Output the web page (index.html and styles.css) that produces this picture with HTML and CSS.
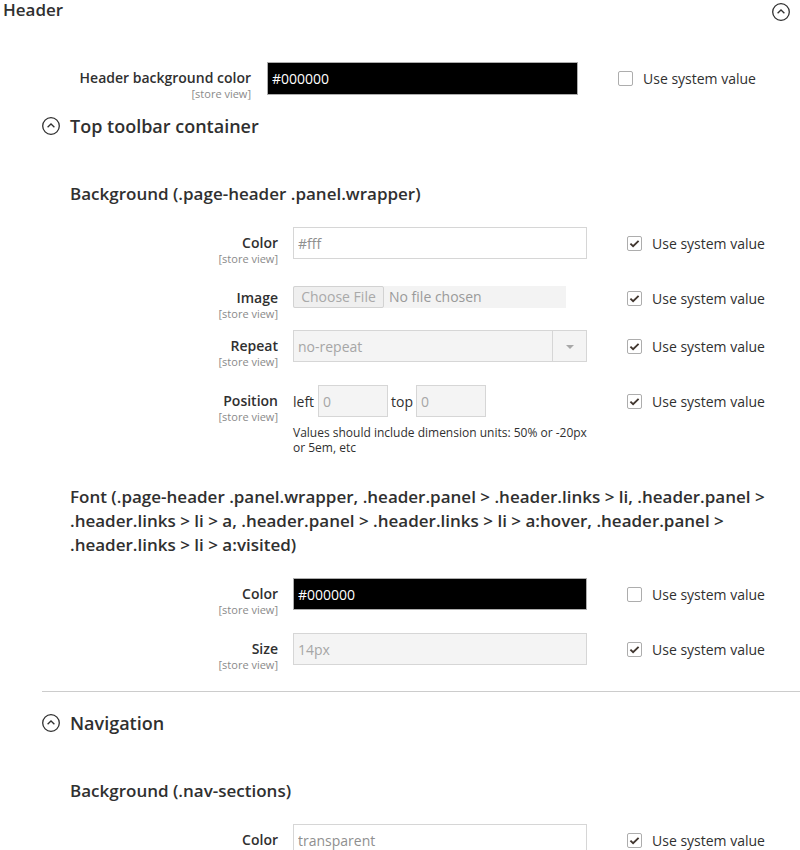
FILE: index.html
```html
<!DOCTYPE html>
<html lang="en">
<head>
<meta charset="utf-8">
<title>Header configuration</title>
<link rel="stylesheet" href="styles.css">
</head>
<body>
<div class="page">
  <div class="section-head">
    <h2 class="section-title">Header</h2>
    <span class="toggle">
      <svg width="18" height="18" viewBox="0 0 18 18"><circle cx="9" cy="9" r="8.3" fill="none" stroke="#303030" stroke-width="1.3"/><path d="M5.6 10.3 L9 7 L12.4 10.3" fill="none" stroke="#303030" stroke-width="1.3"/></svg>
    </span>
  </div>

  <div class="field field-top">
    <div class="label"><span class="label-text">Header background color</span><span class="scope">[store view]</span></div>
    <div class="control"><input class="input input-dark input-tall" type="text" value="#000000"></div>
    <label class="use-default"><span class="cb"></span>Use system value</label>
  </div>

  <div class="group">
    <div class="group-head">
      <svg class="toggle-icon" width="18" height="18" viewBox="0 0 18 18"><circle cx="9" cy="9" r="8.3" fill="none" stroke="#303030" stroke-width="1.3"/><path d="M5.6 10.3 L9 7 L12.4 10.3" fill="none" stroke="#303030" stroke-width="1.3"/></svg>
      <h3 class="group-title">Top toolbar container</h3>
    </div>

    <h4 class="subhead">Background (.page-header .panel.wrapper)</h4>

    <div class="field">
      <div class="label"><span class="label-text">Color</span><span class="scope">[store view]</span></div>
      <div class="control"><input class="input input-light" type="text" value="#fff" disabled></div>
      <label class="use-default"><span class="cb cb-checked"><svg width="15" height="15" viewBox="0 0 15 15"><path d="M3.4 7.6 L6.1 10.1 L11.6 4.9" fill="none" stroke="#41362f" stroke-width="1.9"/></svg></span>Use system value</label>
    </div>

    <div class="field field-file">
      <div class="label"><span class="label-text">Image</span><span class="scope">[store view]</span></div>
      <div class="control">
        <div class="file"><span class="file-btn">Choose File</span><span class="file-name">No file chosen</span></div>
      </div>
      <label class="use-default"><span class="cb cb-checked"><svg width="15" height="15" viewBox="0 0 15 15"><path d="M3.4 7.6 L6.1 10.1 L11.6 4.9" fill="none" stroke="#41362f" stroke-width="1.9"/></svg></span>Use system value</label>
    </div>

    <div class="field">
      <div class="label"><span class="label-text">Repeat</span><span class="scope">[store view]</span></div>
      <div class="control">
        <div class="select"><span class="select-value">no-repeat</span><span class="select-arrow"></span></div>
      </div>
      <label class="use-default"><span class="cb cb-checked"><svg width="15" height="15" viewBox="0 0 15 15"><path d="M3.4 7.6 L6.1 10.1 L11.6 4.9" fill="none" stroke="#41362f" stroke-width="1.9"/></svg></span>Use system value</label>
    </div>

    <div class="field">
      <div class="label"><span class="label-text">Position</span><span class="scope">[store view]</span></div>
      <div class="control">
        <div class="position">
          <span class="pos-label">left</span><input class="input input-disabled pos-left" type="text" value="0" disabled>
          <span class="pos-label">top</span><input class="input input-disabled pos-top" type="text" value="0" disabled>
        </div>
        <p class="note">Values should include dimension units: 50% or -20px or 5em, etc</p>
      </div>
      <label class="use-default"><span class="cb cb-checked"><svg width="15" height="15" viewBox="0 0 15 15"><path d="M3.4 7.6 L6.1 10.1 L11.6 4.9" fill="none" stroke="#41362f" stroke-width="1.9"/></svg></span>Use system value</label>
    </div>

    <h4 class="subhead">Font (.page-header .panel.wrapper, .header.panel &gt; .header.links &gt; li, .header.panel &gt; .header.links &gt; li &gt; a, .header.panel &gt; .header.links &gt; li &gt; a:hover, .header.panel &gt; .header.links &gt; li &gt; a:visited)</h4>

    <div class="field">
      <div class="label"><span class="label-text">Color</span><span class="scope">[store view]</span></div>
      <div class="control"><input class="input input-dark" type="text" value="#000000"></div>
      <label class="use-default"><span class="cb"></span>Use system value</label>
    </div>

    <div class="field">
      <div class="label"><span class="label-text">Size</span><span class="scope">[store view]</span></div>
      <div class="control"><input class="input input-disabled" type="text" value="14px" disabled></div>
      <label class="use-default"><span class="cb cb-checked"><svg width="15" height="15" viewBox="0 0 15 15"><path d="M3.4 7.6 L6.1 10.1 L11.6 4.9" fill="none" stroke="#41362f" stroke-width="1.9"/></svg></span>Use system value</label>
    </div>
  </div>

  <div class="group">
    <div class="group-head">
      <svg class="toggle-icon" width="18" height="18" viewBox="0 0 18 18"><circle cx="9" cy="9" r="8.3" fill="none" stroke="#303030" stroke-width="1.3"/><path d="M5.6 10.3 L9 7 L12.4 10.3" fill="none" stroke="#303030" stroke-width="1.3"/></svg>
      <h3 class="group-title">Navigation</h3>
    </div>

    <h4 class="subhead">Background (.nav-sections)</h4>

    <div class="field">
      <div class="label"><span class="label-text">Color</span><span class="scope">[store view]</span></div>
      <div class="control"><input class="input input-light" type="text" value="transparent" disabled></div>
      <label class="use-default"><span class="cb cb-checked"><svg width="15" height="15" viewBox="0 0 15 15"><path d="M3.4 7.6 L6.1 10.1 L11.6 4.9" fill="none" stroke="#41362f" stroke-width="1.9"/></svg></span>Use system value</label>
    </div>
  </div>
</div>
</body>
</html>
```

FILE: styles.css
```css
html, body {
  margin: 0;
  padding: 0;
  background: #fff;
}

body {
  font-family: "Open Sans", "Liberation Sans", sans-serif;
  color: #303030;
  font-size: 14px;
}

.page {
  width: 800px;
  overflow: hidden;
}

.section-head {
  display: flex;
  justify-content: space-between;
  align-items: flex-start;
  height: 21px;
  padding: 0 10px 0 3px;
}

.section-title {
  margin: 0;
  font-size: 17px;
  line-height: 21px;
  font-weight: 600;
  color: #303030;
  position: relative;
  top: -1px;
}

.toggle {
  display: block;
  width: 18px;
  height: 18px;
  margin-top: 3px;
}

.toggle svg, .toggle-icon {
  display: block;
}

/* field rows */
.field {
  display: grid;
  grid-template-columns: 236px 294px auto;
  column-gap: 15px;
  align-items: start;
  margin-bottom: 17px;
}

.field-top {
  grid-template-columns: 251px 311px auto;
  column-gap: 16px;
  margin-top: 41px;
  margin-bottom: 14px;
}

.field-file {
  margin-bottom: 10px;
}

.label {
  display: flex;
  flex-direction: column;
  align-items: flex-end;
  text-align: right;
  padding-top: 7px;
}

.label-text {
  font-size: 14px;
  line-height: 18px;
  font-weight: 600;
  color: #303030;
}

.scope {
  font-size: 11px;
  line-height: 13px;
  color: #8a8a8a;
}

.control {
  min-width: 0;
}

.input {
  display: block;
  box-sizing: border-box;
  width: 100%;
  height: 32px;
  margin: 0;
  padding: 0 4px;
  border: 1px solid #adadad;
  border-radius: 0;
  font-family: "Open Sans", "Liberation Sans", sans-serif;
  font-size: 14px;
  outline: none;
}

.input-tall {
  height: 33px;
}

.input-dark {
  background: #000;
  color: #fff;
  border-color: #adadad;
}

.input-light {
  background: #fff;
  color: #8f8f8f;
  border-color: #d6d6d6;
}

.input-disabled {
  background: #f4f4f4;
  color: #a6a6a6;
  border-color: #d6d6d6;
}

/* checkbox column */
.use-default {
  display: flex;
  align-items: center;
  gap: 10px;
  height: 33px;
  margin-left: 25px;
  font-size: 14px;
  color: #303030;
  white-space: nowrap;
}

.field-top .use-default {
  margin-left: 24px;
}

.cb {
  box-sizing: border-box;
  display: block;
  width: 15px;
  height: 15px;
  border: 1px solid #adadad;
  border-radius: 2px;
  background: #fff;
  position: relative;
}

.cb svg {
  position: absolute;
  left: -1px;
  top: -1px;
}

/* file */
.file {
  display: flex;
  align-items: stretch;
  width: 273px;
  height: 22px;
  margin-top: 4px;
  background: #f3f3f3;
}

.file-btn {
  box-sizing: border-box;
  width: 91px;
  border: 1px solid #d2d2d2;
  border-radius: 2px;
  background: #efefef;
  color: #a9a9a9;
  text-align: center;
  line-height: 20px;
  font-size: 14px;
}

.file-name {
  padding-left: 5px;
  line-height: 22px;
  color: #9a9a9a;
}

/* select */
.select {
  box-sizing: border-box;
  display: flex;
  width: 100%;
  height: 32px;
  border: 1px solid #d6d6d6;
  background: #f4f4f4;
}

.select-value {
  flex: 1;
  padding-left: 4px;
  line-height: 31px;
  color: #a6a6a6;
}

.select-arrow {
  position: relative;
  width: 33px;
  border-left: 1px solid #d6d6d6;
}

.select-arrow::after {
  content: "";
  position: absolute;
  left: 13px;
  top: 14px;
  border-left: 4px solid transparent;
  border-right: 4px solid transparent;
  border-top: 4px solid #a8a8a8;
}

/* position */
.position {
  display: flex;
  align-items: center;
}

.pos-label {
  font-size: 14px;
  color: #303030;
}

.pos-left {
  width: 70px;
  margin-left: 4px;
  margin-right: 3px;
}

.pos-top {
  width: 70px;
  margin-left: 3px;
}

.note {
  margin: 8px 0 0;
  font-size: 12px;
  line-height: 15px;
  color: #303030;
}

/* groups */
.group {
  margin-left: 42px;
}

.group + .group {
  margin-top: 20px;
  padding-top: 19px;
  border-top: 1px solid #cccccc;
}

.group-head {
  display: flex;
  align-items: center;
  gap: 10px;
  height: 24px;
  margin-bottom: 44px;
}

.group-title {
  margin: 0;
  font-size: 18px;
  line-height: 24px;
  font-weight: 600;
  color: #303030;
}

.subhead {
  margin: 30px 0 21px 28px;
  font-size: 17px;
  line-height: 24px;
  font-weight: 600;
  color: #303030;
}
```
